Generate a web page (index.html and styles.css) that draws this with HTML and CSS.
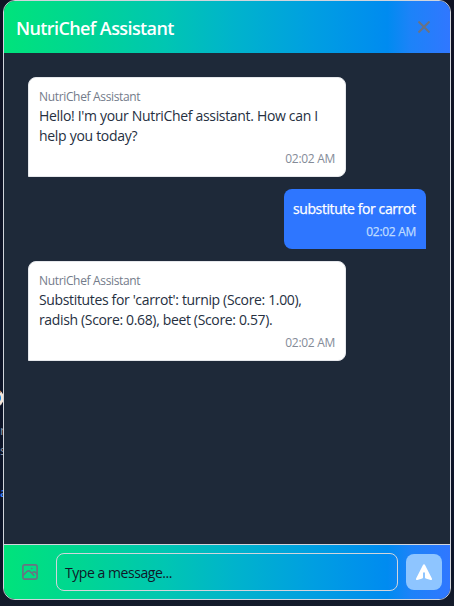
FILE: index.html
```html
<!DOCTYPE html>
<html lang="en">
<head>
<meta charset="utf-8">
<title>NutriChef Assistant</title>
<link rel="stylesheet" href="styles.css">
</head>
<body>
<div class="backdrop" aria-hidden="true"><i class="ring"></i><span class="bit b1">r</span><span class="bit b2">s</span><span class="bit b3">a</span></div>
<main class="chat">
  <header class="chat-header">
    <h1><span class="title">NutriChef Assistant</span></h1>
    <button class="close" aria-label="Close"><svg width="12" height="12" viewBox="0 0 12 12" fill="none" stroke="currentColor" stroke-width="2"><path d="M.5.5l11 11M11.5.5l-11 11"/></svg></button>
  </header>
  <section class="messages">
    <article class="bubble bot">
      <div class="sender">NutriChef Assistant</div>
      <p><span class="l1">Hello! I'm your NutriChef assistant. How can I</span><br><span class="l2">help you today?</span></p>
      <time>02:02 AM</time>
    </article>
    <article class="bubble user">
      <p><span class="l3">substitute for carrot</span></p>
      <time>02:02 AM</time>
    </article>
    <article class="bubble bot">
      <div class="sender">NutriChef Assistant</div>
      <p><span class="l4">Substitutes for 'carrot': turnip (Score: 1.00),</span><br><span class="l5">radish (Score: 0.68), beet (Score: 0.57).</span></p>
      <time>02:02 AM</time>
    </article>
  </section>
  <footer class="composer">
    <button class="attach" aria-label="Attach image"><svg width="16" height="16" viewBox="0 0 16 16" fill="none" stroke="currentColor" stroke-width="1.6" stroke-linecap="round" stroke-linejoin="round"><rect x=".9" y=".9" width="14.2" height="14.2" rx="1.8"/><path d="M1 11.5l4.2-4.2q1.3-1.1 2.6 0l4 4M9.8 9.3l1-1q1.3-1.1 2.6 0L15 9.9M9.8 4.500h.01"/></svg></button>
    <div class="field"><span>Type a message...</span></div>
    <button class="send" aria-label="Send"><svg width="16" height="16" viewBox="0 0 16 16" fill="currentColor"><path d="M8.9.7a1 1 0 0 0-1.8 0L.1 14.6a1 1 0 0 0 1.2 1.4l5-1.430a1 1 0 0 0 .7-.96V9.200a1 1 0 1 1 2 0v4.410a1 1 0 0 0 .7.96l5 1.430a1 1 0 0 0 1.200-1.400z"/></svg></button>
  </footer>
</main>
</body>
</html>
```
FILE: styles.css
```css
* { box-sizing: border-box; }
body {
  margin: 0;
  height: 606px;
  overflow: hidden;
  background: linear-gradient(#0f1224 0, #0c1428 575px, #151c2b 606px);
  font-family: "Open Sans", "Noto Sans", sans-serif;
  font-size: 14px;
  line-height: 20px;
  color: #26303f;
}
h1, p { margin: 0; }
button { border: 0; padding: 0; background: none; display: grid; place-items: center; flex: none; }
.bit, .ring { position: absolute; }
.bit { left: 0; font-size: 13px; color: #8f99a8; }
.b1 { top: 420px; }
.b2 { top: 440px; }
.b3 { top: 482px; color: #3b82f6; font-weight: 600; }
.ring { left: -14px; top: 389px; width: 18px; height: 18px; border: 3px solid #f4e5d8; border-top-color: #d98a4c; border-radius: 50%; background: #1683d8; }
.chat {
  position: relative;
  display: flex;
  flex-direction: column;
  width: 448px;
  height: 600px;
  margin-left: 3px;
  border: 1px solid #d1d5dc;
  border-radius: 12px;
  overflow: hidden;
  background: #1e2939;
}
.chat-header, .composer {
  background: linear-gradient(90deg, #00e37b 0%, #00d594 18%, #00c6b2 36%, #00b4cb 51%, #009fe1 69%, #008bf0 86%, #1c83f8 91%, #3077ff 100%);
}
.chat-header {
  display: flex;
  align-items: center;
  justify-content: space-between;
  height: 52px;
  padding: 0 20px 0 12px;
}
h1 { padding-top: 1px; font-size: 18px; line-height: 28px; font-weight: 600; color: #fff; white-space: nowrap; }
.title { letter-spacing: -.6px; }
.close { width: 12px; height: 12px; color: #6a7282; }
.messages { flex: 1; display: flex; flex-direction: column; gap: 12px; padding: 24px; }
.bubble { border-radius: 8px; white-space: nowrap; }
.bot {
  width: 318px;
  height: 100px;
  padding: 10px;
  border: 1px solid #e5e7eb;
  border-bottom-left-radius: 0;
  background: #fff;
}
.user {
  align-self: flex-end;
  width: 142px;
  height: 60px;
  padding: 10px 10px 10px 9px;
  border-bottom-right-radius: 0;
  background: #2e76ff;
  color: #fff;
}
.sender { font-size: 12px; line-height: 16px; letter-spacing: -.34px; color: #737b8a; padding-top: 1px; }
.bot p { padding-top: 1px; }
time { display: block; margin-top: 5px; text-align: right; font-size: 12px; line-height: 16px; letter-spacing: -.3px; color: #848b98; }
.user time { color: #bedbff; -webkit-text-stroke: .25px currentColor; }
.l1 { letter-spacing: -.325px; }
.l2 { letter-spacing: -.3px; }
.l4 { letter-spacing: -.35px; }
.l5 { letter-spacing: -.35px; }
.l3 { letter-spacing: -.4px; -webkit-text-stroke: .25px currentColor; }
.composer {
  display: flex;
  align-items: center;
  gap: 8px;
  height: 55px;
  padding: 0 8px;
  border-top: 1px solid #d1d5dc;
}
.attach { width: 36px; height: 36px; color: #6a7282; }
.field {
  flex: 1;
  height: 38px;
  padding: 9px 8px 7px;
  border: 1px solid #d1d5dc;
  border-radius: 8px;
  color: #101828;
}
.field span { letter-spacing: -.45px; }
.send { width: 36px; height: 36px; border-radius: 8px; background: #8ec5ff; color: #fff; }
```
